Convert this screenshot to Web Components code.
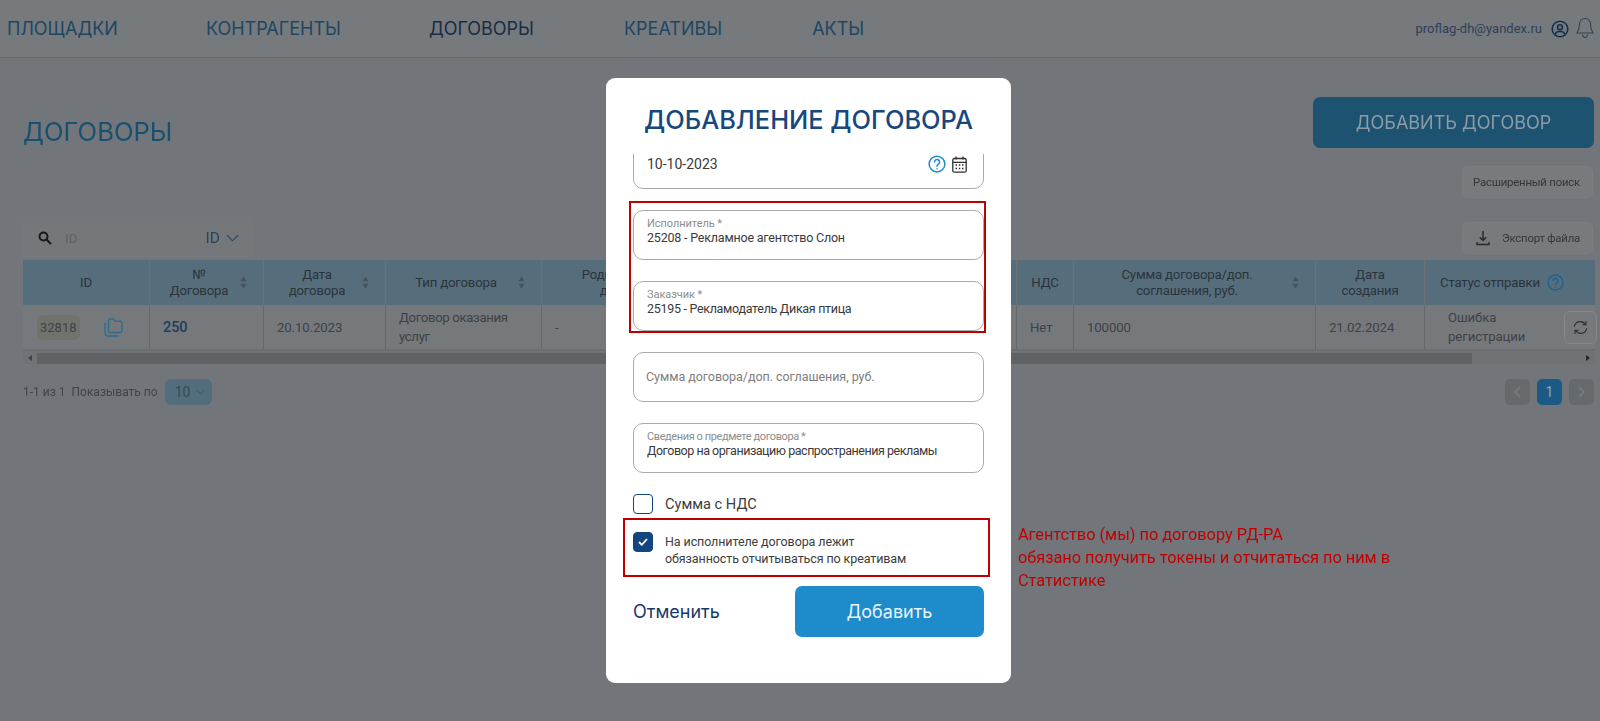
<!doctype html>
<html lang="ru">
<head>
<meta charset="utf-8">
<title>Договоры</title>
<style>
html, body { margin: 0; height: 721px; overflow: hidden; background: #72767a; font-family: Roboto, "Liberation Sans", sans-serif; }
</style>
</head>
<body>
<contracts-page>
    <app-header></app-header>
    <page-toolbar></page-toolbar>
    <contract-table></contract-table>
    <table-footer></table-footer>
</contracts-page>

<modal-layer>
    <contract-dialog></contract-dialog>
    <note-frame style="left:629px;top:201px;width:357px;height:132px"></note-frame>
    <note-frame style="left:623px;top:518px;width:367px;height:59px"></note-frame>
    <note-text style="left:1018px;top:523px">Агентство (мы) по договору РД-РА<br>обязано получить токены и отчитаться по ним в<br>Статистике</note-text>
</modal-layer>

<script>
const HEAD_FONT = `Inter, "Liberation Sans", sans-serif`;

const ICONS = {
    help: `<svg viewBox="0 0 24 24" fill="none" stroke="currentColor" stroke-width="2" stroke-linecap="round"><circle cx="12" cy="12" r="10.500"/><path d="M8.600 9.300a3.400 3.400 0 1 1 5.200 2.900c-1.200.8-1.800 1.400-1.800 2.800"/><path d="M12 18.200v.1"/></svg>`,
    chevron: `<svg viewBox="0 0 14 8" fill="none" stroke="currentColor" stroke-width="1.200"><path d="M1 1l6 6 6-6"/></svg>`,
    sort: `<svg class="s" viewBox="0 0 8 14" fill="#46525c"><path d="M4 0l3.500 5.500h-7z"/><path d="M4 14L.5 8.500h7z"/></svg>`,
};

class ContractsPage extends HTMLElement {
    constructor() {
        super();
        this.attachShadow({ mode: 'open' });
        this.shadowRoot.innerHTML = `
            <style>
            :host { display: flex; flex-direction: column; width: 1600px; height: 721px; filter: blur(.45px); color: #3c4146; }
            </style>
            <slot></slot>
        `;
    }
}

class AppHeader extends HTMLElement {
    constructor() {
        super();
        this.attachShadow({ mode: 'open' });
        this.shadowRoot.innerHTML = `
            <style>
            :host { display: flex; align-items: center; height: 58px; box-sizing: border-box; padding: 0 7px; border-bottom: 1px solid #676b6f; background: #767a7d; }
            nav { display: flex; gap: 88px; font: 400 18px ${HEAD_FONT}; color: #1d4663; }
            nav .on { color: #1a2c44; margin-right: 2px; }
            nav .late { margin-right: 2px; }
            .user { margin-left: auto; display: flex; align-items: center; font-size: 13px; color: #2e4058; }
            .user svg { display: block; }
            .face { margin-left: 9px; width: 18px; height: 18px; color: #16314f; }
            .bell { margin-left: 7px; width: 18px; height: 23px; color: #2f4254; margin-right: -1px; }
            </style>
            <nav>
                <span>ПЛОЩАДКИ</span><span>КОНТРАГЕНТЫ</span><span class="on">ДОГОВОРЫ</span><span class="late">КРЕАТИВЫ</span><span>АКТЫ</span>
            </nav>
            <div class="user">
                <span>proflag-dh@yandex.ru</span>
                <svg class="face" viewBox="0 0 18 18" fill="none" stroke="currentColor" stroke-width="1.600"><circle cx="9" cy="9" r="7.800"/><circle cx="9" cy="7.200" r="2.400"/><path d="M4.200 14.400c.6-2 2.400-3 4.800-3s4.200 1 4.800 3"/></svg>
                <svg class="bell" viewBox="0 0 18 23" fill="none" stroke="currentColor" stroke-width="1.100"><path d="M9 1.500c-3.600 0-5.600 2.800-5.600 6.200 0 4-1 6.300-2.400 8.300h16c-1.400-2-2.400-4.300-2.400-8.300C14.600 4.300 12.600 1.500 9 1.500z"/><path d="M6.500 17.500c.3 2 1.300 3 2.500 3s2.200-1 2.500-3"/></svg>
            </div>
        `;
    }
}

class GhostButton extends HTMLElement {
    constructor() {
        super();
        this.attachShadow({ mode: 'open' });
        this.shadowRoot.innerHTML = `
            <style>
            :host { display: inline-flex; align-items: center; justify-content: flex-end; gap: 11px; box-sizing: border-box; width: 131px; height: 32px; padding-right: 12px; border: 1px solid #7b7f82; border-radius: 6px; background: #777b7e; font-size: 11.400px; letter-spacing: -.22px; color: #33373b; }
            ::slotted(svg) { width: 16px; height: 16px; color: #26292c; }
            </style>
            <slot></slot>
        `;
    }
}

class PageToolbar extends HTMLElement {
    constructor() {
        super();
        this.attachShadow({ mode: 'open' });
        this.shadowRoot.innerHTML = `
            <style>
            :host { display: flex; flex-direction: column; padding: 39px 7px 0 23px; }
            .top { display: flex; align-items: center; justify-content: space-between; }
            h1 { margin: 18px 0 0; font: 400 25.600px ${HEAD_FONT}; color: #185070; }
            .add { width: 281px; height: 51px; border-radius: 7px; background: #1d5270; color: #8b9ca8; font: 400 18px ${HEAD_FONT}; display: flex; align-items: center; justify-content: center; margin-right: -1px; }
            .adv { align-self: flex-end; margin-top: 18px; }
            .row { display: flex; align-items: center; justify-content: space-between; margin-top: 19px; height: 41px; margin-bottom: 2px; }
            .search { display: flex; align-items: center; box-sizing: border-box; width: 230px; height: 41px; padding: 0 14px 0 15px; background: #74787b; font-size: 13.500px; }
            .search svg { display: block; }
            .search .glass { width: 14px; height: 14px; color: #17191b; }
            .search .hint { margin-left: 13px; color: #5c6165; }
            .search .kind { margin-left: auto; color: #24445f; font-size: 15.500px; display: flex; align-items: center; gap: 6px; }
            .search .kind svg { width: 13px; height: 8px; }
            .exp svg { display: block; }
            </style>
            <div class="top">
                <h1>ДОГОВОРЫ</h1>
                <div class="add">ДОБАВИТЬ ДОГОВОР</div>
            </div>
            <ghost-button class="adv">Расширенный поиск</ghost-button>
            <div class="row">
                <div class="search">
                    <svg class="glass" viewBox="0 0 14 14" fill="none" stroke="currentColor" stroke-width="2"><circle cx="5.500" cy="5.500" r="4"/><path d="M8.500 8.500l4.500 4.500"/></svg>
                    <span class="hint">ID</span>
                    <span class="kind">ID ${ICONS.chevron}</span>
                </div>
                <ghost-button class="exp">
                    <svg viewBox="0 0 16 16" fill="none" stroke="currentColor" stroke-width="1.400"><path d="M8 1v9M4.800 7.200L8 10.400l3.200-3.200"/><path d="M2 12v2.500h12V12"/></svg>
                    <span>Экспорт файла</span>
                </ghost-button>
            </div>
        `;
    }
}

class ContractTable extends HTMLElement {
    constructor() {
        super();
        this.attachShadow({ mode: 'open' });
        this.shadowRoot.innerHTML = `
            <style>
            :host { display: block; margin: 0 5px 0 23px; font-size: 13.200px; line-height: 16px; position: relative; letter-spacing: -.1px; }
            .grid { display: grid; grid-template-columns: 127px 114px 122px 156px 166px 309px 57px 242px 109px 170px; grid-template-rows: 45px 46px; }
            .h { display: flex; align-items: center; justify-content: center; text-align: center; position: relative; background: #566e7c; color: #2b333a; border-right: 1px solid #6a7278; box-sizing: border-box; padding: 0 12px; letter-spacing: -.2px; }
            .h.r { border-right: 0; }
            .h.so { padding-right: 27px; }
            .h svg.s { position: absolute; right: 16px; top: 16px; width: 7px; height: 13px; }
            .c { display: flex; align-items: center; background: #75797c; color: #3d4247; border-right: 1px solid #65696c; border-bottom: 2px solid #6a6e71; box-sizing: border-box; padding: 0 13px; line-height: 19px; }
            .c.r { border-right: 0; padding-left: 23px; padding-right: 50px; }
            .type { letter-spacing: -.35px; padding-right: 30px; }
            .badge { background: #6f736b; border-radius: 6px; padding: 3px 3px; margin-left: 1px; }
            .copy { width: 19px; height: 19px; margin-left: 24px; color: #2d6b93; flex: none; }
            .num { color: #1f3c5c; font-weight: 500; font-size: 14.500px; }
            .st { justify-content: flex-start; padding-left: 15px; white-space: nowrap; }
            .st svg { width: 17px; height: 17px; margin-left: 7px; color: #1a6596; }
            .redo { position: absolute; left: 1541px; top: 51px; width: 33px; height: 33px; box-sizing: border-box; border: 1px solid #85898b; border-radius: 6px; background: #767a7d; display: flex; align-items: center; justify-content: center; color: #2c2f32; }
            .redo svg { width: 17px; height: 17px; }
            .bar { display: flex; align-items: center; height: 12px; margin-top: 1px; background: #6f7376; }
            .bar i { width: 14px; display: flex; justify-content: center; }
            .bar i::before { content: ''; border: 3px solid transparent; border-right: 4px solid #3d4043; border-left: 0; }
            .bar i.n::before { border-right: 0; border-left: 4px solid #26282a; }
            .bar b { display: block; width: 1435px; height: 11px; background: #5f6366; }
            .bar span { flex: 1; }
            </style>
            <div class="grid">
                <div class="h">ID</div>
                <div class="h so">№<br>Договора ${ICONS.sort}</div>
                <div class="h so">Дата<br>договора ${ICONS.sort}</div>
                <div class="h so">Тип договора ${ICONS.sort}</div>
                <div class="h">Родительский<br>договор</div>
                <div class="h"></div>
                <div class="h">НДС</div>
                <div class="h so">Сумма договора/доп.<br>соглашения, руб. ${ICONS.sort}</div>
                <div class="h">Дата<br>создания</div>
                <div class="h r st">Статус отправки ${ICONS.help}</div>

                <div class="c"><span class="badge">32818</span>
                    <svg class="copy" viewBox="0 0 19 19" fill="none" stroke="currentColor" stroke-width="1.300"><path d="M1 5v10a3 3 0 0 0 3 3h11"/><path d="M4.500 2.500a1.500 1.500 0 0 1 1.500-1.500h3l2 2.200h5.500a1.500 1.500 0 0 1 1.500 1.500v8.300a1.500 1.500 0 0 1-1.500 1.500H6a1.500 1.500 0 0 1-1.500-1.500z"/></svg>
                </div>
                <div class="c"><span class="num">250</span></div>
                <div class="c">20.10.2023</div>
                <div class="c type">Договор оказания услуг</div>
                <div class="c">-</div>
                <div class="c"></div>
                <div class="c">Нет</div>
                <div class="c">100000</div>
                <div class="c">21.02.2024</div>
                <div class="c r">Ошибка регистрации</div>
            </div>
            <div class="redo">
                <svg viewBox="0 0 18 18" fill="none" stroke="currentColor" stroke-width="1.200"><path d="M2.500 8.200C3 5 5.500 2.800 8.800 2.800c2.300 0 4.200 1.100 5.400 3"/><path d="M14.800 2.200v3.900h-3.900"/><path d="M15.500 9.800C15 13 12.500 15.200 9.200 15.200c-2.300 0-4.200-1.100-5.400-3"/><path d="M3.200 15.800v-3.900h3.900"/></svg>
            </div>
            <div class="bar"><i></i><b></b><span></span><i class="n"></i></div>
        `;
    }
}

class TableFooter extends HTMLElement {
    constructor() {
        super();
        this.attachShadow({ mode: 'open' });
        this.shadowRoot.innerHTML = `
            <style>
            :host { display: flex; align-items: center; margin: 15px 6px 0 23px; height: 26px; font-size: 12px; color: #3f4448; }
            .size { display: flex; align-items: center; gap: 6px; box-sizing: border-box; width: 47px; height: 26px; margin-left: 7px; padding-left: 10px; border-radius: 6px; background: #526d7c; font-size: 14px; color: #3a4952; }
            .size svg { width: 9px; height: 6px; }
            .pager { margin-left: auto; display: flex; gap: 7px; }
            .pager span { display: flex; align-items: center; justify-content: center; width: 25px; height: 26px; border-radius: 5px; background: #666a6d; color: #7d8184; }
            .pager .on { background: #1a5a84; color: #8ba8ba; font-size: 14px; }
            .pager svg { width: 7px; height: 12px; }
            </style>
            <span>1-1 из 1&nbsp; Показывать по</span>
            <div class="size">10 ${ICONS.chevron}</div>
            <div class="pager">
                <span><svg viewBox="0 0 7 12" fill="none" stroke="currentColor" stroke-width="1.200"><path d="M6 1L1 6l5 5"/></svg></span>
                <span class="on">1</span>
                <span><svg viewBox="0 0 7 12" fill="none" stroke="currentColor" stroke-width="1.200"><path d="M1 1l5 5-5 5"/></svg></span>
            </div>
        `;
    }
}

class ModalLayer extends HTMLElement {
    constructor() {
        super();
        this.attachShadow({ mode: 'open' });
        this.shadowRoot.innerHTML = `
            <style>
            :host { position: fixed; inset: 0; display: block; padding: 78px 0 0 606px; box-sizing: border-box; }
            </style>
            <slot></slot>
        `;
    }
}

class FormField extends HTMLElement {
    constructor() {
        super();
        this.attachShadow({ mode: 'open' });
    }

    connectedCallback() {
        const label = this.getAttribute('label');
        const value = this.getAttribute('value');
        const placeholder = this.getAttribute('placeholder');
        this.shadowRoot.innerHTML = `
            <style>
            :host { display: flex; align-items: flex-start; box-sizing: border-box; height: 50px; padding: 6px 13px 0 13px; border: 1.500px solid #a9abac; border-radius: 10px; background: #fff; flex: none; white-space: nowrap; }
            .txt { display: flex; flex-direction: column; }
            .lbl { font-size: 11px; line-height: 13px; color: #8d8d8d; letter-spacing: var(--lbl-track, -.05px); }
            .val { font-size: 12.500px; line-height: 16px; color: #3a3a3a; letter-spacing: var(--val-track, -.2px); }
            .ph { font-size: 12.500px; line-height: 36px; color: #7e7e7e; margin-left: -1px; letter-spacing: -.05px; }
            slot { display: flex; flex: 1; align-items: center; }
            </style>
            <div class="txt">
                ${label ? `<span class="lbl">${label}</span>` : ''}
                ${value ? `<span class="val">${value}</span>` : ''}
                ${placeholder ? `<span class="ph">${placeholder}</span>` : ''}
            </div>
            <slot></slot>
        `;
    }
}

class CheckRow extends HTMLElement {
    constructor() {
        super();
        this.attachShadow({ mode: 'open' });
    }

    connectedCallback() {
        const on = this.hasAttribute('checked');
        this.shadowRoot.innerHTML = `
            <style>
            :host { display: flex; align-items: flex-start; gap: 12px; font-size: 12.500px; line-height: 17px; color: #3d3d3d; flex: none; letter-spacing: -.1px; }
            :host(.big) { font-size: 14.600px; line-height: 19px; letter-spacing: 0; }
            .box { width: 20px; height: 20px; box-sizing: border-box; border: 1.500px solid #13467f; border-radius: 4px; flex: none; display: flex; align-items: center; justify-content: center; background: ${on ? '#13467f' : '#fff'}; }
            .box svg { width: 10px; height: 8px; }
            .txt { padding-top: 1px; }
            </style>
            <span class="box">${on ? `<svg viewBox="0 0 10 8" fill="none" stroke="#fff" stroke-width="1.800"><path d="M1 4l2.800 2.800L9 1"/></svg>` : ''}</span>
            <span class="txt"><slot></slot></span>
        `;
    }
}

class ContractDialog extends HTMLElement {
    constructor() {
        super();
        this.attachShadow({ mode: 'open' });
        this.shadowRoot.innerHTML = `
            <style>
            :host { display: flex; flex-direction: column; box-sizing: border-box; width: 405px; height: 605px; padding: 0 27px; background: #fff; border-radius: 9px; }
            h2 { margin: 0 -10px; height: 76px; box-sizing: border-box; padding-top: 24px; text-align: center; font: 500 25.400px/36px ${HEAD_FONT}; color: #17477f; white-space: nowrap; }
            .scroll { flex: 1; display: flex; flex-direction: column; overflow: hidden; gap: 21px; min-height: 0; }
            .date { margin-top: -15px; padding-top: 0; padding-right: 16px; align-items: center; }
            .date span { font-size: 14px; color: #3a3a3a; line-height: 48px; }
            .date svg { display: block; }
            .help { width: 18px; height: 18px; color: #1e8bcb; margin-left: auto; }
            .cal { width: 15px; height: 17px; color: #2f2f2f; margin-left: 6px; }
            .checks { display: flex; flex-direction: column; gap: 18px; }
            .actions { display: flex; align-items: center; justify-content: space-between; margin-top: -2px; }
            .cancel { font-size: 18px; color: #17386a; font-family: ${HEAD_FONT}; }
            .ok { display: flex; align-items: center; justify-content: center; width: 189px; height: 51px; border-radius: 7px; background: #1e8bcb; color: #eaf4fb; font: 400 18px ${HEAD_FONT}; }
            </style>
            <h2>ДОБАВЛЕНИЕ ДОГОВОРА</h2>
            <div class="scroll">
                <form-field class="date">
                    <span>10-10-2023</span>
                    <svg class="help" viewBox="0 0 24 24" fill="none" stroke="currentColor" stroke-width="2" stroke-linecap="round"><circle cx="12" cy="12" r="10.500"/><path d="M8.600 9.300a3.400 3.400 0 1 1 5.200 2.900c-1.200.8-1.800 1.400-1.800 2.800"/><path d="M12 18.200v.1"/></svg>
                    <svg class="cal" viewBox="0 0 15 17" fill="none" stroke="currentColor" stroke-width="1.300"><rect x=".8" y="2.500" width="13.400" height="13.700" rx="1.500"/><path d="M.8 6.300h13.400M4 .5v3M11 .5v3" /><path d="M3.500 9h1.500M6.800 9h1.500M10 9h1.500M3.500 12.500h1.500M6.800 12.500h1.500M10 12.500h1.500" stroke-width="1.500"/></svg>
                </form-field>
                <form-field label="Исполнитель *" value="25208 - Рекламное агентство Слон"></form-field>
                <form-field style="--val-track:-.3px" label="Заказчик *" value="25195 - Рекламодатель Дикая птица"></form-field>
                <form-field placeholder="Сумма договора/доп. соглашения, руб."></form-field>
                <form-field style="--val-track:-.47px;--lbl-track:-.4px" label="Сведения о предмете договора *" value="Договор на организацию распространения рекламы"></form-field>
                <div class="checks">
                    <check-row class="big">Сумма с НДС</check-row>
                    <check-row checked>На исполнителе договора лежит<br>обязанность отчитываться по креативам</check-row>
                </div>
                <div class="actions">
                    <span class="cancel">Отменить</span>
                    <span class="ok">Добавить</span>
                </div>
            </div>
        `;
    }
}

// Red marks drawn over the screenshot, placed by their own coordinates
class NoteFrame extends HTMLElement {
    constructor() {
        super();
        this.attachShadow({ mode: 'open' });
        this.shadowRoot.innerHTML = `
            <style>
            :host { position: absolute; display: block; box-sizing: border-box; border: 2.500px solid #c00000; }
            </style>
        `;
    }
}

class NoteText extends HTMLElement {
    constructor() {
        super();
        this.attachShadow({ mode: 'open' });
        this.shadowRoot.innerHTML = `
            <style>
            :host { position: absolute; display: block; font-size: 16.300px; line-height: 23px; color: #c00000; white-space: nowrap; }
            </style>
            <slot></slot>
        `;
    }
}

customElements.define('contracts-page', ContractsPage);
customElements.define('app-header', AppHeader);
customElements.define('ghost-button', GhostButton);
customElements.define('page-toolbar', PageToolbar);
customElements.define('contract-table', ContractTable);
customElements.define('table-footer', TableFooter);
customElements.define('modal-layer', ModalLayer);
customElements.define('form-field', FormField);
customElements.define('check-row', CheckRow);
customElements.define('contract-dialog', ContractDialog);
customElements.define('note-frame', NoteFrame);
customElements.define('note-text', NoteText);
</script>
</body>
</html>
